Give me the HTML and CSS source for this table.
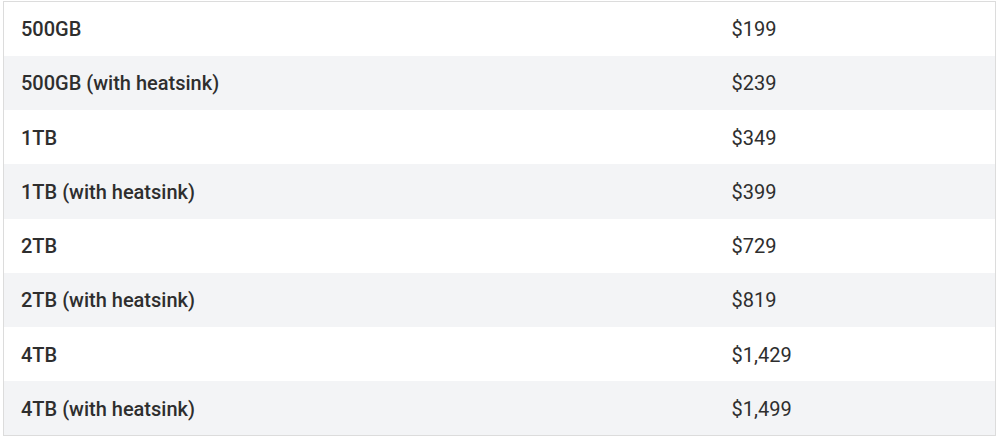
FILE: index.html
```html
<!DOCTYPE html>
<html lang="en">
<head>
    <meta charset="UTF-8">
    <meta name="viewport" content="width=device-width, initial-scale=1.0">
    <title>SSD Pricing</title>
    <link rel="stylesheet" href="styles.css">
</head>
<body>
    <table class="price-table">
        <tbody>
            <tr><td class="model">500GB</td><td class="price">$199</td></tr>
            <tr><td class="model">500GB (with heatsink)</td><td class="price">$239</td></tr>
            <tr><td class="model">1TB</td><td class="price">$349</td></tr>
            <tr><td class="model">1TB (with heatsink)</td><td class="price">$399</td></tr>
            <tr><td class="model">2TB</td><td class="price">$729</td></tr>
            <tr><td class="model">2TB (with heatsink)</td><td class="price">$819</td></tr>
            <tr><td class="model">4TB</td><td class="price">$1,429</td></tr>
            <tr><td class="model">4TB (with heatsink)</td><td class="price">$1,499</td></tr>
        </tbody>
    </table>
</body>
</html>
```

FILE: styles.css
```css
body {
    margin: 0;
    padding: 1px 0 0 3px;
    background: #fff;
    font-family: Roboto, 'Liberation Sans', sans-serif;
    color: #2e2e2e;
}

.price-table {
    width: 993px;
    border-collapse: collapse;
    border: 1px solid #dcdcdc;
    font-size: 20px;
}

.price-table td {
    height: 54.25px;
    padding: 1px 17px 0;
    box-sizing: border-box;
    vertical-align: middle;
}

.price-table tr:nth-child(even) td {
    background: #f3f4f6;
}

.model {
    width: 711px;
    font-weight: 500;
}

.price {
    font-weight: 400;
}
```
